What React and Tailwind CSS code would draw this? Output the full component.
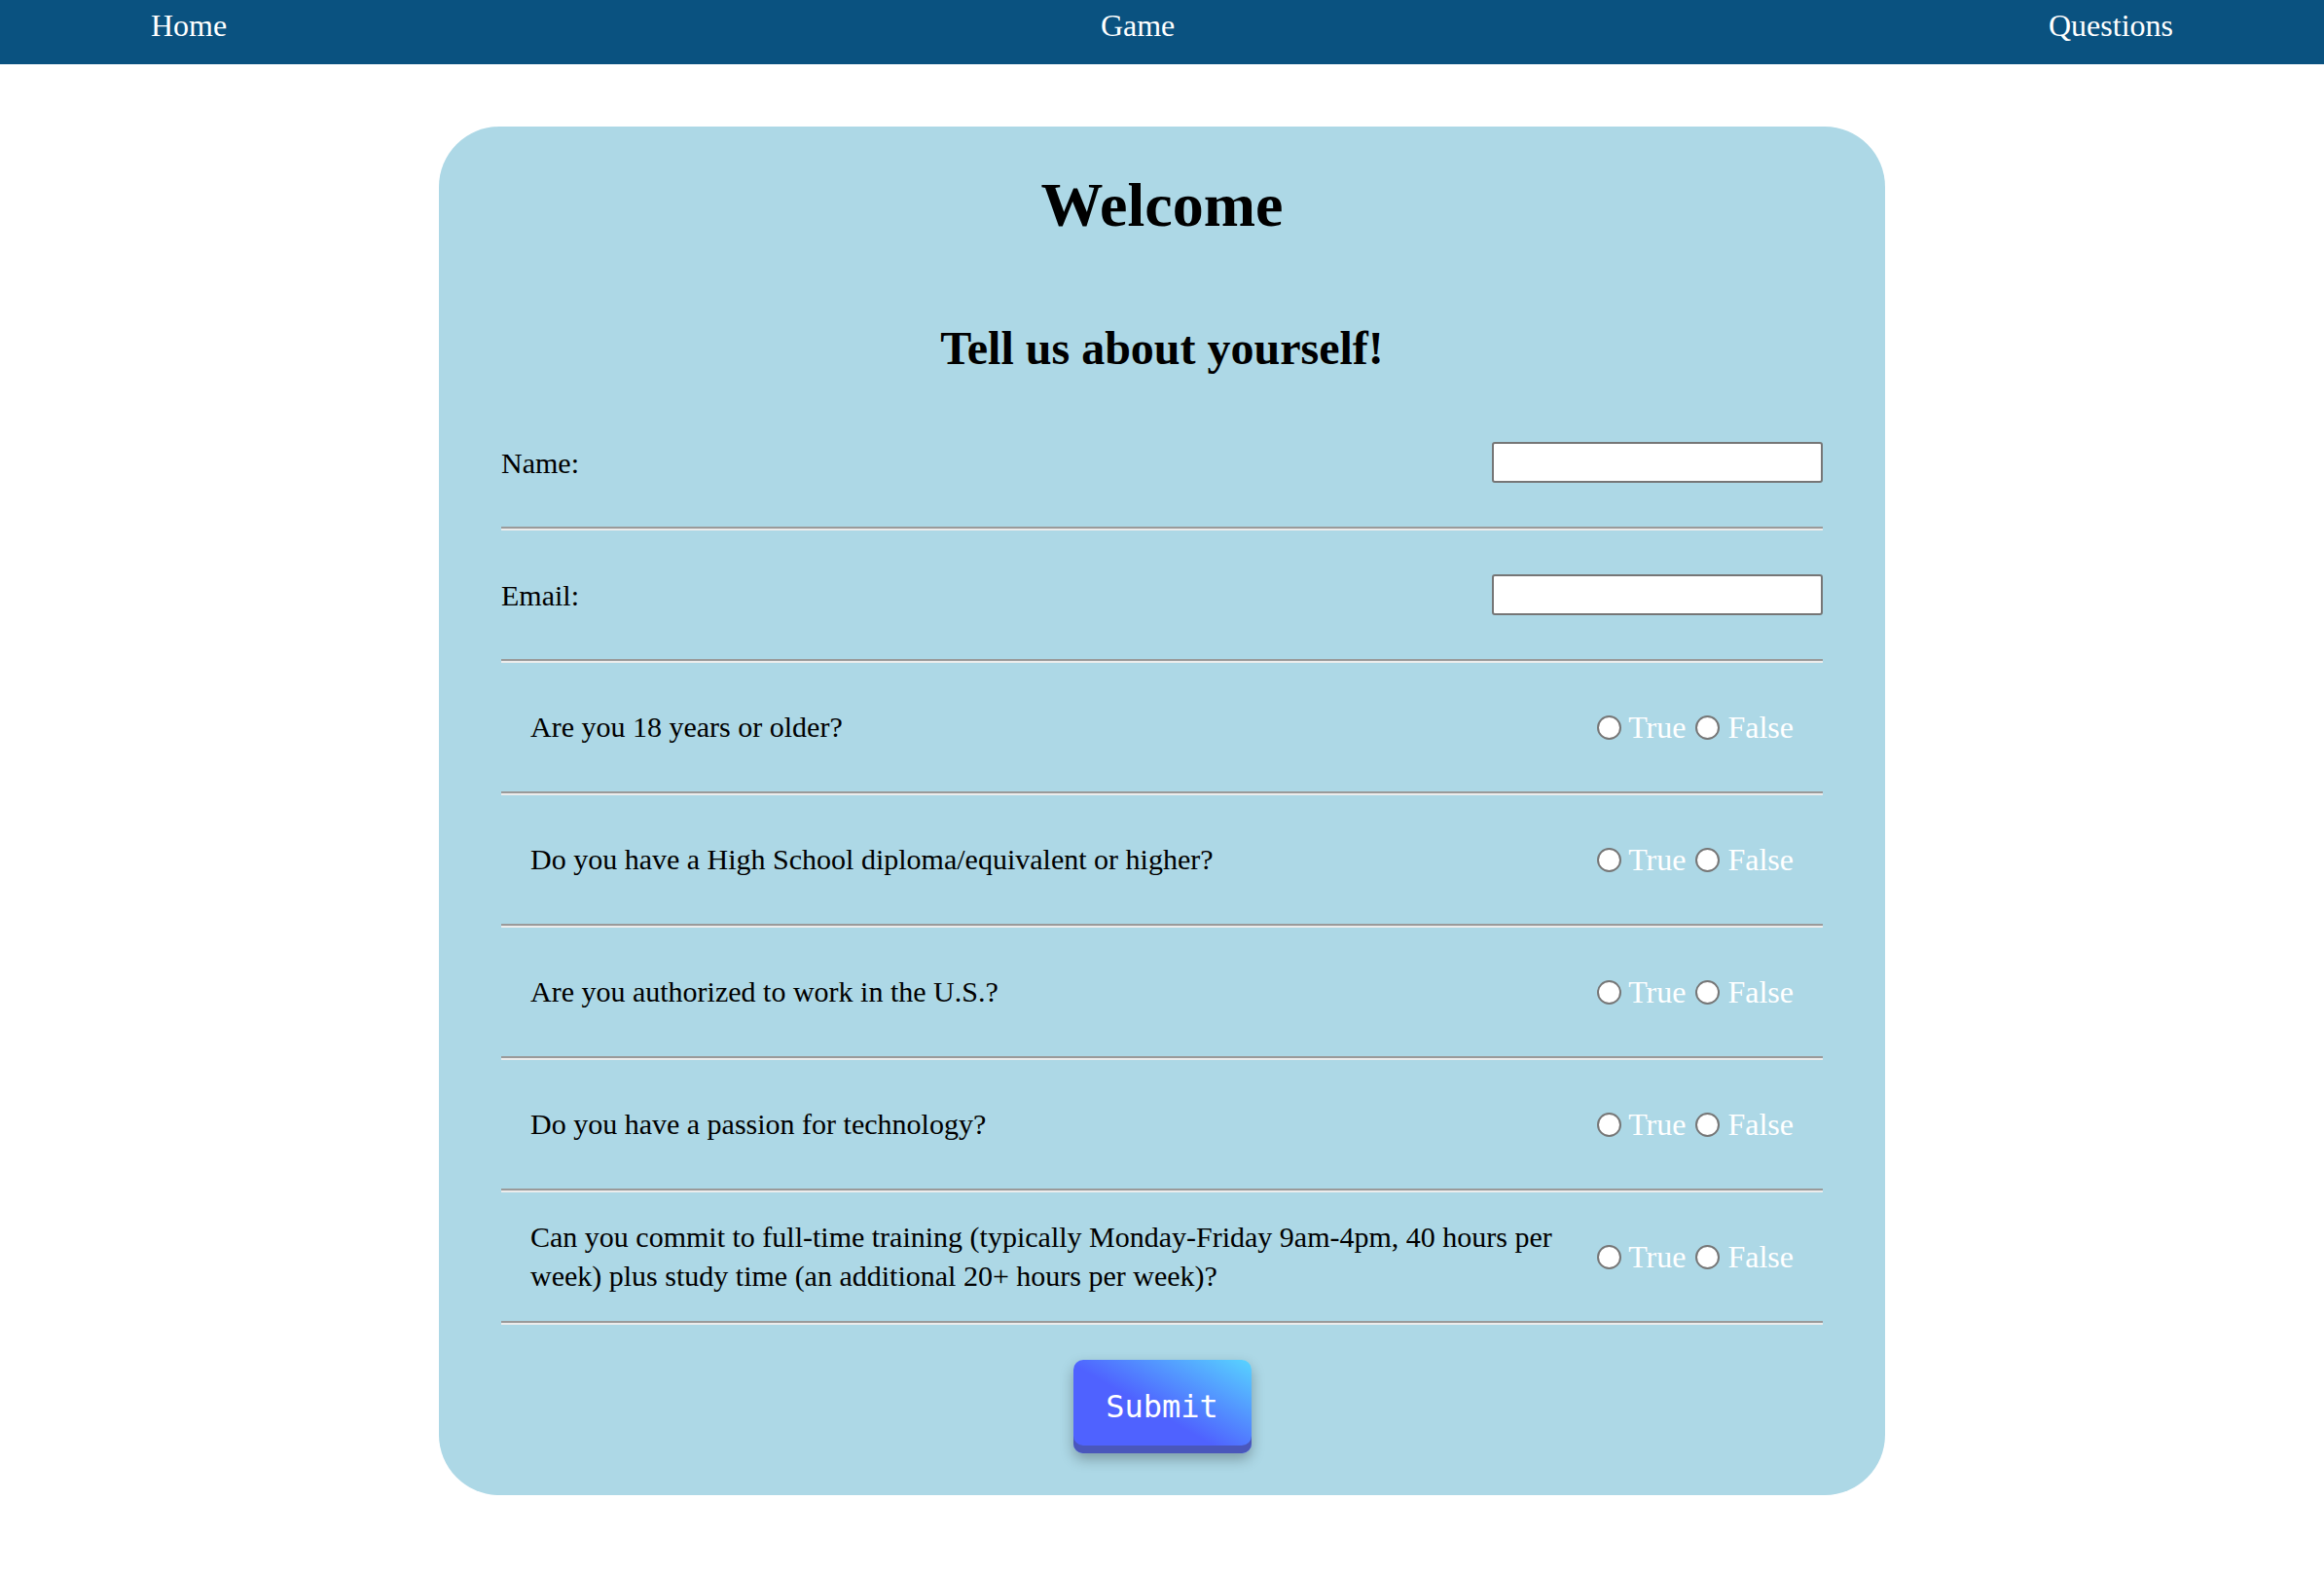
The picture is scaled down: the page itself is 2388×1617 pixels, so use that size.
import React from "react";

const questions = [
  "Are you 18 years or older?",
  "Do you have a High School diploma/equivalent or higher?",
  "Are you authorized to work in the U.S.?",
  "Do you have a passion for technology?",
  "Can you commit to full-time training (typically Monday-Friday 9am-4pm, 40 hours per week) plus study time (an additional 20+ hours per week)?",
];

function Divider() {
  return <div className="border-t-2 border-b-2 border-t-[#9a9a9a] border-b-[#ececec]" />;
}

function InputRow({ label, name, type }) {
  return (
    <>
      <div className="flex h-[132px] items-center justify-between">
        <label htmlFor={name} className="text-[30px] leading-[35px] text-black">
          {label}
        </label>
        <input
          id={name}
          name={name}
          type={type}
          className="h-[42px] w-[340px] rounded-[3px] border-2 border-[#767676] bg-white outline-none"
        />
      </div>
      <Divider />
    </>
  );
}

function QuestionRow({ text, index }) {
  return (
    <>
      <div className="flex h-[132px] items-center justify-between px-[30px]">
        <p className="max-w-[1070px] text-[30px] leading-[40px] text-black">{text}</p>
        <div className="flex items-center text-[32px] leading-[36px] text-white">
          <input
            type="radio"
            name={`q${index}`}
            className="h-[25px] w-[25px] appearance-none rounded-full border-2 border-[#767676] bg-white"
          />
          <span className="ml-[7px]">True</span>
          <input
            type="radio"
            name={`q${index}`}
            className="ml-[10px] h-[25px] w-[25px] appearance-none rounded-full border-2 border-[#767676] bg-white"
          />
          <span className="ml-[8px]">False</span>
        </div>
      </div>
      <Divider />
    </>
  );
}

export default function App() {
  return (
    <div className="min-h-screen bg-white font-['Liberation_Serif','Times_New_Roman',serif]">
      {/* Nav */}
      <nav className="flex h-[66px] items-start justify-between bg-[#0a5280] px-[155px] pt-[8px] text-[32px] leading-[37px] text-white">
        <a href="#">Home</a>
        <a href="#">Game</a>
        <a href="#">Questions</a>
      </nav>

      {/* Form card */}
      <main className="pt-[64px] pb-[80px]">
        <form className="mx-auto w-[1486px] rounded-[62px] bg-[#add8e6] px-[64px] pt-[45px] pb-[43px]">
          <h1 className="text-center text-[64px] font-bold leading-[72px] text-black">Welcome</h1>
          <h2 className="mt-[83px] text-center text-[48px] font-bold leading-[56px] text-black">
            Tell us about yourself!
          </h2>

          <div className="mt-[23px]">
            <InputRow label="Name:" name="name" type="text" />
            <InputRow label="Email:" name="email" type="email" />
            {questions.map((q, i) => (
              <QuestionRow key={i} text={q} index={i} />
            ))}
          </div>

          <div className="mt-[36px] flex justify-center">
            <button
              type="button"
              className="h-[96px] w-[183px] rounded-[10px] bg-[linear-gradient(30deg,#4f62ff_45%,#58d4ff)] font-['DejaVu_Sans_Mono',monospace] text-[32px] text-white shadow-[inset_0_-8px_0_#4a57bb,0_6px_14px_rgba(0,0,0,0.28)]"
            >
              Submit
            </button>
          </div>
        </form>
      </main>
    </div>
  );
}
